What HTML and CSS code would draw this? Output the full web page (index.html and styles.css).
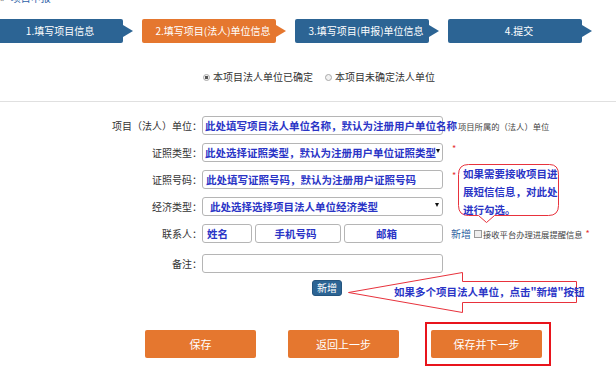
FILE: index.html
```html
<!DOCTYPE html>
<html lang="zh-CN">
<head>
<meta charset="utf-8">
<title>项目申报</title>
<link rel="stylesheet" href="styles.css">
</head>
<body>
<div class="page">
  <div class="crumb"><span class="crumb-sep">»</span><span class="crumb-link">项目申报</span></div>

  <div class="steps">
    <div class="step step-first">1.填写项目信息</div>
    <div class="step step-active">2.填写项目(法人)单位信息</div>
    <div class="step">3.填写项目(申报)单位信息</div>
    <div class="step">4.提交</div>
  </div>

  <div class="choice">
    <label class="opt"><span class="radio radio-on"></span>本项目法人单位已确定</label>
    <label class="opt opt-second"><span class="radio"></span>本项目未确定法人单位</label>
  </div>

  <div class="divider"></div>

  <div class="form">
    <div class="row">
      <div class="label">项目（法人）单位：</div>
      <div class="field">此处填写项目法人单位名称，默认为注册用户单位名称</div>
      <div class="note">项目所属的（法人）单位</div>
    </div>
    <div class="row">
      <div class="label">证照类型：</div>
      <div class="field field-select"><span>此处选择证照类型，默认为注册用户单位证照类型</span><span class="caret"></span></div>
      <span class="star">*</span>
    </div>
    <div class="row">
      <div class="label">证照号码：</div>
      <div class="field field-pad">此处填写证照号码，默认为注册用户证照号码</div>
      <span class="star">*</span>
    </div>
    <div class="row">
      <div class="label">经济类型：</div>
      <div class="field field-select field-wide"><span>此处选择选择项目法人单位经济类型</span><span class="caret"></span></div>
    </div>
    <div class="row row-contact">
      <div class="label">联系人：</div>
      <div class="boxes">
        <div class="box box-name">姓名</div>
        <div class="box box-phone">手机号码</div>
        <div class="box box-mail">邮箱</div>
      </div>
      <span class="link-add">新增</span>
      <span class="check"></span>
      <span class="note note-check">接收平台办理进展提醒信息</span>
      <span class="star star-check">*</span>
    </div>
    <div class="row">
      <div class="label">备注：</div>
      <div class="field"></div>
    </div>
  </div>

  <div class="add-wrap"><span class="btn-add">新增</span></div>

  <div class="actions">
    <span class="btn">保存</span>
    <span class="btn">返回上一步</span>
    <span class="focus"><span class="btn">保存并下一步</span></span>
  </div>

  <svg class="marks" width="616" height="380" viewBox="0 0 616 380" aria-hidden="true">
    <path d="M468.5,164.5 H549.5 Q558.5,164.5 558.5,174.5 V205.5 Q558.5,215.5 548.5,215.5 H494.5 L486.5,222.5 L478.5,215.5 H468.5 Q458.5,215.5 458.5,205.5 V174.5 Q458.5,164.5 468.5,164.5 Z" fill="none" stroke="#e8323c" stroke-width="1"/>
    <polygon points="348.5,292.5 462.5,272.5 462.5,281.5 576.5,281.5 576.5,302.5 462.5,302.5 462.5,312.5" fill="none" stroke="#e8323c" stroke-width="1"/>
  </svg>

  <div class="bubble-text">如果需要接收项目进<br>展短信信息，对此处<br>进行勾选。</div>
  <div class="arrow-text">如果多个项目法人单位，点击"新增"按钮</div>
</div>
</body>
</html>
```

FILE: styles.css
```css
html, body {
  margin: 0;
  padding: 0;
  background: #ffffff;
}

body {
  font-family: "Noto Sans CJK SC", "Noto Sans", sans-serif;
  font-size: 10px;
  color: #333333;
  overflow: hidden;
}

.page {
  position: relative;
  width: 616px;
  height: 380px;
  overflow: hidden;
}

/* breadcrumb (cut off at the top) */
.crumb {
  height: 4px;
  overflow: hidden;
  display: flex;
  align-items: flex-end;
  line-height: 12px;
  font-size: 10px;
  white-space: nowrap;
}
.crumb-sep {
  color: #777777;
  margin-right: 6px;
}
.crumb-link {
  color: #2d62a8;
}

/* steps */
.steps {
  display: flex;
  gap: 19px;
  margin-top: 15px;
  height: 24px;
}
.step {
  position: relative;
  flex: none;
  width: 134px;
  height: 24px;
  box-sizing: border-box;
  padding-left: 8px;
  background: #2c6494;
  border-radius: 2px;
  color: #ffffff;
  font-size: 10px;
  line-height: 24px;
  text-align: center;
  white-space: nowrap;
}
.step::after {
  content: "";
  position: absolute;
  right: -10px;
  top: 6px;
  border-left: 10px solid #2c6494;
  border-top: 6px solid transparent;
  border-bottom: 6px solid transparent;
}
.step-first {
  margin-left: -11px;
}
.step-active {
  background: #e5772f;
}
.step-active::after {
  border-left-color: #e5772f;
}

/* radio choice */
.choice {
  display: flex;
  align-items: center;
  margin-top: 27px;
  padding-left: 203px;
  height: 14px;
  line-height: 14px;
  font-size: 10px;
  color: #333333;
}
.opt {
  display: flex;
  align-items: center;
}
.opt-second {
  margin-left: 12px;
}
.radio {
  width: 7px;
  height: 7px;
  box-sizing: border-box;
  border: 1px solid #a8a8a8;
  border-radius: 50%;
  background: #f2f2f2;
  margin-right: 3px;
}
.radio-on {
  background: radial-gradient(circle, #555555 0 1.4px, #f2f2f2 1.9px);
}

.divider {
  margin-top: 17px;
  height: 0;
  border-top: 1px solid #e0e0e0;
}

/* form */
.form {
  margin-top: 14px;
}
.row {
  display: flex;
  align-items: center;
  height: 19px;
  margin-bottom: 8px;
  white-space: nowrap;
}
.row-contact {
  margin-top: 3px;
  margin-bottom: 11px;
}
.label {
  flex: none;
  width: 202px;
  text-align: right;
  font-size: 10px;
  color: #333333;
}
.field {
  flex: none;
  width: 241px;
  height: 19px;
  box-sizing: border-box;
  border: 1px solid #b5b5b5;
  border-radius: 3px;
  padding-left: 2px;
  display: flex;
  align-items: center;
  color: #2a34c6;
  font-weight: bold;
  font-size: 10.5px;
  white-space: nowrap;
}
.field-pad {
  padding-left: 3px;
}
.field-select {
  justify-content: space-between;
  padding-right: 3px;
}
.field-wide {
  padding-left: 7px;
}
.caret {
  flex: none;
  width: 0;
  height: 0;
  border-top: 4px solid #111111;
  border-left: 2.5px solid transparent;
  border-right: 2.5px solid transparent;
  margin-top: -3px;
}
.note {
  margin-left: 15px;
  font-size: 8.3px;
  color: #444444;
}
.star {
  align-self: flex-start;
  margin-left: 9px;
  color: #e53333;
  font-size: 9px;
  line-height: 12px;
}

.boxes {
  display: flex;
  gap: 3px;
  flex: none;
}
.box {
  height: 19px;
  box-sizing: border-box;
  border: 1px solid #b5b5b5;
  border-radius: 3px;
  display: flex;
  align-items: center;
  color: #2a34c6;
  font-weight: bold;
  font-size: 10.5px;
}
.box-name {
  width: 50px;
  padding-left: 4px;
}
.box-phone {
  width: 86px;
  justify-content: center;
  padding-right: 5px;
}
.box-mail {
  width: 99px;
  justify-content: center;
  padding-right: 14px;
}
.link-add {
  margin-left: 8px;
  color: #2d5fa0;
  font-size: 10px;
}
.check {
  flex: none;
  width: 8px;
  height: 8px;
  box-sizing: border-box;
  border: 1px solid #9a9a9a;
  background: #eeeeee;
  margin-left: 3px;
}
.note-check {
  margin-left: 1px;
}
.star-check {
  align-self: center;
  margin-left: 3px;
}

/* add button */
.add-wrap {
  display: flex;
  margin-top: -1px;
  padding-left: 312px;
}
.btn-add {
  width: 30px;
  height: 16px;
  box-sizing: border-box;
  border: 1px solid #24547e;
  background: #2c6494;
  border-radius: 3px;
  color: #ffffff;
  font-size: 10px;
  line-height: 14px;
  text-align: center;
}

/* bottom actions */
.actions {
  display: flex;
  align-items: flex-start;
  gap: 32px;
  margin-top: 34px;
  padding-left: 145px;
}
.btn {
  display: block;
  width: 111px;
  height: 28px;
  background: #e5772f;
  border-radius: 2px;
  color: #ffffff;
  font-size: 11px;
  line-height: 28px;
  text-align: center;
}
.focus {
  display: block;
  border: 2px solid #e8141c;
  padding: 6px 7px 6px 4px;
  margin: -8px -9px -8px -6px;
}

/* annotations drawn over the form */
.marks {
  position: absolute;
  left: 0;
  top: 0;
  pointer-events: none;
}
.bubble-text {
  position: absolute;
  left: 463px;
  top: 165px;
  font-size: 10.5px;
  line-height: 18px;
  font-weight: bold;
  color: #2a34c6;
  white-space: nowrap;
}
.arrow-text {
  position: absolute;
  left: 394px;
  top: 283px;
  font-size: 10.5px;
  line-height: 18px;
  font-weight: bold;
  color: #2a34c6;
  white-space: nowrap;
}
```
